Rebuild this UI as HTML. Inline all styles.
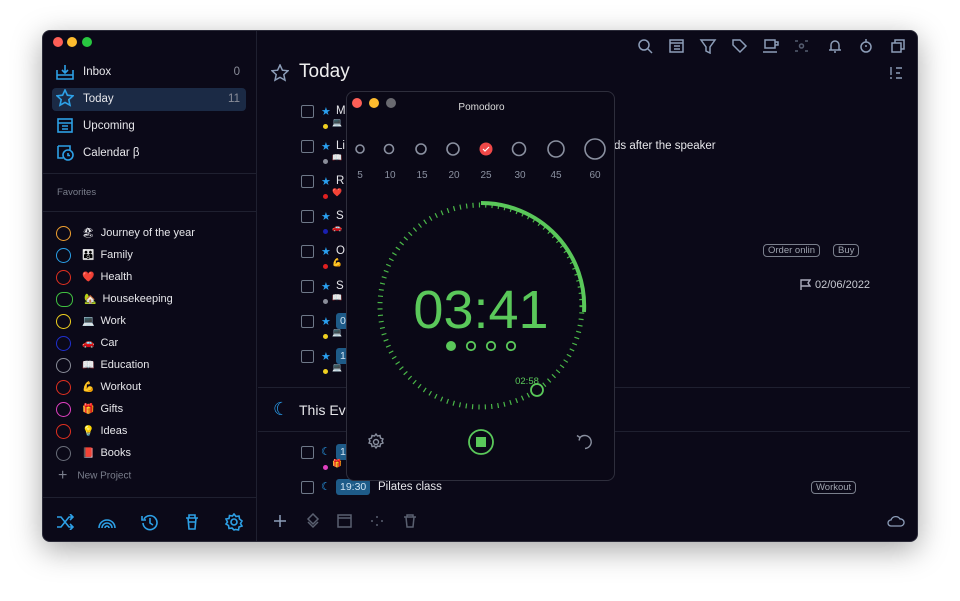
<!DOCTYPE html>
<html><head><meta charset="utf-8"><style>
*{margin:0;padding:0;box-sizing:border-box}
body{width:960px;height:601px;background:#fff;font-family:"Liberation Sans",sans-serif;position:relative;overflow:hidden;color:#e6e6ea}
.win{position:absolute;left:42px;top:30px;width:876px;height:512px;background:#0b0918;border-radius:8px;box-shadow:0 8px 30px rgba(0,0,0,.35);overflow:hidden;border:1px solid #2a2a38}
.side{position:absolute;left:0;top:0;width:214px;height:512px;border-right:1px solid #1f2030}
.dot{position:absolute;width:10px;height:10px;border-radius:50%}
.nav{position:absolute;left:9px;width:194px;height:23px;font-size:11.5px;line-height:23px;padding-left:31px}
.nav .n{position:absolute;right:6px;top:0;color:#8a8d99}
.hr{position:absolute;height:1px;background:#1f2030}
.fav{position:absolute;left:13px;font-size:11px;height:20px;line-height:20px}
.fav i{display:inline-block;width:15px;height:15px;border-radius:50%;border:1.5px solid;vertical-align:middle;margin-right:11px}
.fav span{margin-right:6px;font-size:10px}
.ico{position:absolute;stroke:#2da0e6;fill:none;stroke-width:1.6}
.cb{position:absolute;width:13px;height:13px;border:1.5px solid #6e7888;border-radius:2px}
.st{position:absolute;color:#2aa0f0;font-size:11px}
.tt{position:absolute;font-size:11.5px;color:#e6e6ea}
.sd{position:absolute;width:5px;height:5px;border-radius:50%}
.pop{position:absolute;left:346px;top:91px;width:269px;height:390px;background:#0a0816;border:1px solid #2e2e3c;border-radius:8px}
.tag{position:absolute;border:1px solid #7a7f8c;border-radius:4px;font-size:9.5px;color:#9ea3ae;padding:0 4px;height:13px;line-height:11px}
.pill{position:absolute;background:#1e5b88;border-radius:3px;color:#cfe3f3;font-size:10.5px;height:16px;line-height:16px;padding:0 4px}
</style></head><body>
<div class="win">
 <div class="side">
  <div class="dot" style="left:10px;top:6px;background:#fe5f57"></div>
  <div class="dot" style="left:24px;top:6px;background:#febc2e"></div>
  <div class="dot" style="left:39px;top:6px;background:#28c840"></div>
  <svg class="ico" style="left:13px;top:33px" width="18" height="16"><path d="M1 6v9h16V6M1 11h16M9 1v8M6 6l3 3 3-3"/></svg>
  <div class="nav" style="top:30px">Inbox<span class="n">0</span></div>
  <div class="nav" style="top:57px;background:#1b2a45;border-radius:4px">Today<span class="n">11</span></div>
  <svg class="ico" style="left:13px;top:58px" width="18" height="18"><path d="M9 1l2.4 5.2 5.6.6-4.2 3.8 1.2 5.6L9 13.4 4 16.2l1.2-5.6L1 6.8l5.6-.6z"/></svg>
  <div class="nav" style="top:84px">Upcoming</div>
  <svg class="ico" style="left:14px;top:86px" width="16" height="16"><rect x="1" y="2" width="14" height="13"/><path d="M1 6h14M5 9h6M5 12h6"/></svg>
  <div class="nav" style="top:111px">Calendar β</div>
  <svg class="ico" style="left:13px;top:112px" width="18" height="18"><path d="M2 3h12v4M2 3v12h5"/><circle cx="12" cy="12" r="5"/><path d="M12 10v2.5h2"/></svg>
  <div class="hr" style="left:0;top:142px;width:214px"></div>
  <div style="position:absolute;left:14px;top:156px;font-size:9.5px;color:#7a7e8c">Favorites</div>
  <div class="hr" style="left:0;top:180px;width:214px"></div>
  <div class="fav" style="top:192px"><i style="border-color:#f0a030"></i><span>🏖</span>Journey of the year</div>
  <div class="fav" style="top:214px"><i style="border-color:#2aa0e8"></i><span>👪</span>Family</div>
  <div class="fav" style="top:236px"><i style="border-color:#e03020"></i><span>❤️</span>Health</div>
  <div class="fav" style="top:258px"><i style="border-color:#40c040;border-radius:7px;width:17px"></i><span>🏡</span>Housekeeping</div>
  <div class="fav" style="top:280px"><i style="border-color:#f0d020"></i><span>💻</span>Work</div>
  <div class="fav" style="top:302px"><i style="border-color:#2030d0"></i><span>🚗</span>Car</div>
  <div class="fav" style="top:324px"><i style="border-color:#8a8d99"></i><span>📖</span>Education</div>
  <div class="fav" style="top:346px"><i style="border-color:#e03020"></i><span>💪</span>Workout</div>
  <div class="fav" style="top:368px"><i style="border-color:#e040c0"></i><span>🎁</span>Gifts</div>
  <div class="fav" style="top:390px"><i style="border-color:#e03020"></i><span>💡</span>Ideas</div>
  <div class="fav" style="top:412px"><i style="border-color:#6a6e7a"></i><span>📕</span>Books</div>
  <div style="position:absolute;left:15px;top:436px;font-size:10px;color:#7a7e8c"><span style="font-size:16px;vertical-align:middle;margin-right:10px">+</span>New Project</div>
  <div class="hr" style="left:0;top:466px;width:214px"></div>
  <svg class="ico" style="left:13px;top:483px" width="18" height="16"><path d="M1 3h4l8 10h4M1 13h4l8-10h4M14 0l3 3-3 3M14 10l3 3-3 3"/></svg>
  <svg class="ico" style="left:55px;top:484px" width="18" height="14"><path d="M1 13a8 8 0 0116 0M4 13a5 5 0 0110 0M7 13a2 2 0 014 0"/></svg>
  <svg class="ico" style="left:98px;top:482px" width="18" height="18"><path d="M3 6a7 7 0 11-1 4M1 3v4h4M9 5v5l3 2"/></svg>
  <svg class="ico" style="left:142px;top:483px" width="14" height="16"><path d="M1 4h12M3 4l1 11h6l1-11M4 4V1h6v3M3 8h8"/></svg>
  <svg class="ico" style="left:182px;top:482px" width="18" height="18"><circle cx="9" cy="9" r="3"/><path d="M9 1l2 2.5 3-.5.5 3L17 8l-1.5 2.5L17 13l-3 1-.5 3-3-.5L9 17l-2-2-3 .5-.5-3L1 11l1.5-2L1 6l3-.5L4.5 2.5l3 .5z"/></svg>
 </div>
 <svg style="position:absolute;left:594px;top:7px" width="270" height="16" fill="none" stroke="#8c9db8" stroke-width="1.5">
  <circle cx="7" cy="7" r="5"/><path d="M11 11l4 4"/>
  <rect x="33" y="2" width="13" height="12"/><path d="M33 5h13M37 8h6M37 11h6"/>
  <path d="M64 2h14l-5 7v6l-4-2V9z"/>
  <path d="M96 2h7l6 6-6 6-7-7z"/>
  <path d="M128 2h10v8h-10zM138 4h3v3h-3M126 14h14"/>
  <path stroke="#555d70" d="M158 3h3M168 3h3M158 13h3M168 13h3"/><circle stroke="#555d70" cx="164.5" cy="8" r="2"/>
  <path d="M192 12h12M194 12V7a4 4 0 018 0v5M198 13v2"/>
  <circle cx="229" cy="9" r="5"/><path d="M229 1v3M229 9V7"/>
  <rect x="255" y="5" width="9" height="9"/><path d="M258 5V2h9v9h-3"/>
 </svg>
 <svg style="position:absolute;left:846px;top:35px" width="14" height="14" fill="none" stroke="#8c9db8" stroke-width="1.4"><path d="M2 1v8M2 11v2M7 2h6M7 7h4M7 12h6"/></svg>
 <svg style="position:absolute;left:228px;top:33px" width="18" height="18" fill="none" stroke="#8c9db8" stroke-width="1.5"><path d="M9 1l2.4 5.2 5.6.6-4.2 3.8 1.2 5.6L9 13.4 4 16.2l1.2-5.6L1 6.8l5.6-.6z"/></svg>
 <div style="position:absolute;left:256px;top:30px;font-size:19px;color:#eee">Today</div>

 <div class="cb" style="left:258px;top:74px"></div><div class="st" style="left:278px;top:74px">★</div><div class="tt" style="left:293px;top:74px">M</div><div class="sd" style="left:280px;top:93px;background:#f0d020"></div><div style="position:absolute;left:289px;top:87px;font-size:8px">💻</div>
 <div class="cb" style="left:258px;top:109px"></div><div class="st" style="left:278px;top:109px">★</div><div class="tt" style="left:293px;top:109px">Li</div><div class="sd" style="left:280px;top:128px;background:#8a8d99"></div><div style="position:absolute;left:289px;top:122px;font-size:8px">📖</div>
 <div class="cb" style="left:258px;top:144px"></div><div class="st" style="left:278px;top:144px">★</div><div class="tt" style="left:293px;top:144px">R</div><div class="sd" style="left:280px;top:163px;background:#e02020"></div><div style="position:absolute;left:289px;top:157px;font-size:8px">❤️</div>
 <div class="cb" style="left:258px;top:179px"></div><div class="st" style="left:278px;top:179px">★</div><div class="tt" style="left:293px;top:179px">S</div><div class="sd" style="left:280px;top:198px;background:#1a20b0"></div><div style="position:absolute;left:289px;top:192px;font-size:8px">🚗</div>
 <div class="cb" style="left:258px;top:214px"></div><div class="st" style="left:278px;top:214px">★</div><div class="tt" style="left:293px;top:214px">O</div><div class="sd" style="left:280px;top:233px;background:#e02020"></div><div style="position:absolute;left:289px;top:227px;font-size:8px">💪</div>
 <div class="cb" style="left:258px;top:249px"></div><div class="st" style="left:278px;top:249px">★</div><div class="tt" style="left:293px;top:249px">S</div><div class="sd" style="left:280px;top:268px;background:#8a8d99"></div><div style="position:absolute;left:289px;top:262px;font-size:8px">📖</div>
 <div class="cb" style="left:258px;top:284px"></div><div class="st" style="left:278px;top:284px">★</div><div class="pill" style="left:293px;top:282px">0</div><div class="sd" style="left:280px;top:303px;background:#f0d020"></div><div style="position:absolute;left:289px;top:297px;font-size:8px">💻</div>
 <div class="cb" style="left:258px;top:319px"></div><div class="st" style="left:278px;top:319px">★</div><div class="pill" style="left:293px;top:317px">1</div><div class="sd" style="left:280px;top:338px;background:#f0d020"></div><div style="position:absolute;left:289px;top:332px;font-size:8px">💻</div>
 <div class="tt" style="left:571px;top:109px">ds after the speaker</div>
 <div class="tag" style="left:720px;top:213px">Order onlin</div><div class="tag" style="left:790px;top:213px">Buy</div>
 <svg style="position:absolute;left:757px;top:248px" width="11" height="11" fill="none" stroke="#aab" stroke-width="1.4"><path d="M1 11V1h9l-2 3 2 3H1"/></svg>
 <div style="position:absolute;left:772px;top:248px;font-size:11px;color:#c8cad2">02/06/2022</div>
 <div class="hr" style="left:215px;top:356px;width:652px"></div>
 <div style="position:absolute;left:230px;top:368px;color:#2aa0f0;font-size:18px">☾</div>
 <div style="position:absolute;left:256px;top:371px;font-size:14px">This Ev</div>
 <div class="hr" style="left:215px;top:400px;width:652px"></div>
 <div class="cb" style="left:258px;top:415px"></div><div class="st" style="left:278px;top:414px">☾</div><div class="pill" style="left:293px;top:413px">1</div><div class="sd" style="left:280px;top:434px;background:#e040c0"></div><div style="position:absolute;left:289px;top:428px;font-size:8px">🎁</div>
 <div class="cb" style="left:258px;top:450px"></div><div class="st" style="left:278px;top:449px">☾</div><div class="pill" style="left:293px;top:448px">19:30</div><div class="tt" style="left:335px;top:450px">Pilates class</div>
 <div class="tag" style="left:768px;top:450px">Workout</div>
 <svg style="position:absolute;left:230px;top:482px" width="200" height="16" fill="none" stroke="#5a6070" stroke-width="1.5">
  <path stroke="#8c9db8" d="M7 2v12M1 8h12"/>
  <path d="M40 1l5 5-5 5-5-5zM35 9l5 5 5-5"/>
  <rect x="65" y="2" width="13" height="12"/><path d="M65 5h13"/>
  <path d="M104 3v2M104 11v2M98 8h2M108 8h2"/>
  <path d="M131 4h12M133 4l1 10h6l1-10M134 4V2h6v2"/>
 </svg>
 <svg style="position:absolute;left:844px;top:484px" width="18" height="12" fill="none" stroke="#8c9db8" stroke-width="1.3"><path d="M4 11a3 3 0 010-6 5 5 0 019-1 3.5 3.5 0 011 7z"/></svg>
</div>

<div class="pop">
 <div class="dot" style="left:5px;top:6px;background:#fe5f57"></div>
 <div class="dot" style="left:22px;top:6px;background:#febc2e"></div>
 <div class="dot" style="left:39px;top:6px;background:#6a6a70"></div>
 <div style="position:absolute;left:0;width:269px;top:10px;text-align:center;font-size:10px;color:#ddd">Pomodoro</div>
 <svg style="position:absolute;left:0;top:0" width="269" height="390">
  <g fill="none" stroke="#8a90a0" stroke-width="1.6">
   <circle cx="13" cy="57" r="4"/><circle cx="42" cy="57" r="4.5"/><circle cx="74" cy="57" r="5"/><circle cx="106" cy="57" r="6"/>
   <circle cx="172" cy="57" r="6.5"/><circle cx="209" cy="57" r="8"/><circle cx="248" cy="57" r="10"/>
  </g>
  <circle cx="139" cy="57" r="6.5" fill="#f04848"/><path d="M136 57l2 2 4-4" stroke="#fff" fill="none" stroke-width="1.2"/>
  <g fill="#8a90a0" font-size="10" text-anchor="middle" font-family="Liberation Sans">
   <text x="13" y="86">5</text><text x="43" y="86">10</text><text x="75" y="86">15</text><text x="107" y="86">20</text><text x="139" y="86">25</text><text x="173" y="86">30</text><text x="209" y="86">45</text><text x="248" y="86">60</text>
  </g>
  <circle cx="134" cy="214" r="101" fill="none" stroke="#4ab848" stroke-width="5" stroke-dasharray="1.2 5.2"/>
  <path d="M134 111 A103 103 0 0 1 237 220" fill="none" stroke="#5ac85a" stroke-width="4"/>
  <circle cx="190" cy="298" r="6" fill="#0a0816" stroke="#5ac85a" stroke-width="1.8"/>
  <text x="180" y="292" fill="#5ac85a" font-size="9.5" text-anchor="middle" font-family="Liberation Sans">02:58</text>
  <text x="134" y="236" fill="#5ac85a" font-size="54" text-anchor="middle" font-family="Liberation Sans">03:41</text>
  <circle cx="104" cy="254" r="5" fill="#5ac85a"/>
  <g fill="none" stroke="#5ac85a" stroke-width="1.8"><circle cx="124" cy="254" r="4.2"/><circle cx="144" cy="254" r="4.2"/><circle cx="164" cy="254" r="4.2"/></g>
  <circle cx="134" cy="350" r="12" fill="none" stroke="#5ac85a" stroke-width="1.8"/>
  <rect x="129" y="345" width="10" height="10" fill="#5ac85a"/>
  <g fill="none" stroke="#8a90a0" stroke-width="1.4">
   <circle cx="29" cy="350" r="2.5"/><path d="M29 342l1.5 2 2.5-.5.5 2.5 2.5 1-1 2 1 2-2.5 1-.5 2.5-2.5-.5-1.5 2-1.5-2-2.5.5-.5-2.5-2.5-1 1-2-1-2 2.5-1 .5-2.5 2.5.5z"/>
   <path d="M233 345.5 A6.5 6.5 0 1 1 238 356.5"/><path d="M230 343.5l3 2-1 3"/>
  </g>
 </svg>
</div>
</body></html>
